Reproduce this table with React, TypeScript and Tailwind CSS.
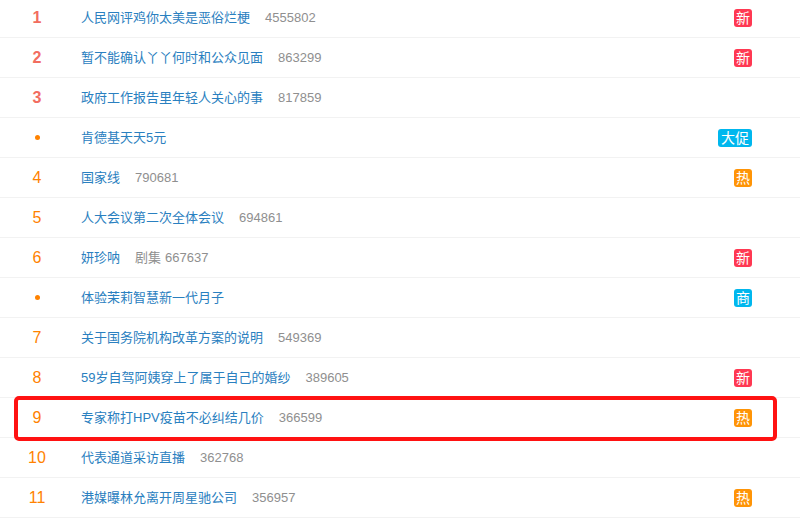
import React from "react";

type Badge = { text: string; color: string; wide?: boolean };
type Row = { rank: string; title: string; label?: string; count?: string; badge?: Badge };

const NEW: Badge = { text: "新", color: "bg-[#ff3852]" };
const HOT: Badge = { text: "热", color: "bg-[#ff9406]" };

const rows: Row[] = [
  { rank: "1", title: "人民网评鸡你太美是恶俗烂梗", count: "4555802", badge: NEW },
  { rank: "2", title: "暂不能确认丫丫何时和公众见面", count: "863299", badge: NEW },
  { rank: "3", title: "政府工作报告里年轻人关心的事", count: "817859" },
  { rank: "•", title: "肯德基天天5元", badge: { text: "大促", color: "bg-[#00b7ee]", wide: true } },
  { rank: "4", title: "国家线", count: "790681", badge: HOT },
  { rank: "5", title: "人大会议第二次全体会议", count: "694861" },
  { rank: "6", title: "妍珍呐", label: "剧集", count: "667637", badge: NEW },
  { rank: "•", title: "体验茉莉智慧新一代月子", badge: { text: "商", color: "bg-[#00b7ee]" } },
  { rank: "7", title: "关于国务院机构改革方案的说明", count: "549369" },
  { rank: "8", title: "59岁自驾阿姨穿上了属于自己的婚纱", count: "389605", badge: NEW },
  { rank: "9", title: "专家称打HPV疫苗不必纠结几价", count: "366599", badge: HOT },
  { rank: "10", title: "代表通道采访直播", count: "362768" },
  { rank: "11", title: "港媒曝林允离开周星驰公司", count: "356957", badge: HOT },
];

export default function App() {
  return (
    <div
      className="w-[800px] h-[524px] overflow-hidden bg-white"
      style={{ fontFamily: '"Liberation Sans", "Noto Sans CJK SC", sans-serif' }}
    >
      <div className="-mt-[2px]">
        {rows.map((r, i) => {
          const top = i < 3;
          return (
            <div
              key={i}
              className="relative flex items-center h-[40px] border-b border-[#f2f2f2] box-border"
            >
              <div className="w-[74px] flex justify-center">
                {r.rank === "•" ? (
                  <span className="block w-[5px] h-[5px] rounded-full bg-[#ff8200]" />
                ) : (
                  <span
                    className={
                      top
                        ? "text-[16px] font-bold text-[#f26d5f] leading-none"
                        : "text-[16px] text-[#ff8200] leading-none"
                    }
                  >
                    {r.rank}
                  </span>
                )}
              </div>
              <div className="ml-[7px] flex-1 flex items-center text-[13px] leading-none">
                <span className="text-[#2a80c0]">{r.title}</span>
                {r.label && <span className="ml-[15px] text-[#8f8f8f]">{r.label}</span>}
                {r.count && (
                  <span className={(r.label ? "ml-[4px]" : "ml-[15px]") + " text-[#8f8f8f]"}>
                    {r.count}
                  </span>
                )}
              </div>
              <div className="w-[80px] mr-[48px] flex justify-end">
                {r.badge && (
                  <span
                    className={
                      r.badge.color +
                      " text-white text-[14px] leading-none h-[18px] rounded-[3px] flex items-center justify-center " +
                      (r.badge.wide ? "w-[34px]" : "w-[18px]")
                    }
                  >
                    {r.badge.text}
                  </span>
                )}
              </div>
              {r.rank === "9" && (
                <div className="absolute left-[14px] -top-[2px] w-[763px] h-[45px] border-[4px] border-[#ff1212] rounded-[5px] pointer-events-none" />
              )}
            </div>
          );
        })}
      </div>
    </div>
  );
}
